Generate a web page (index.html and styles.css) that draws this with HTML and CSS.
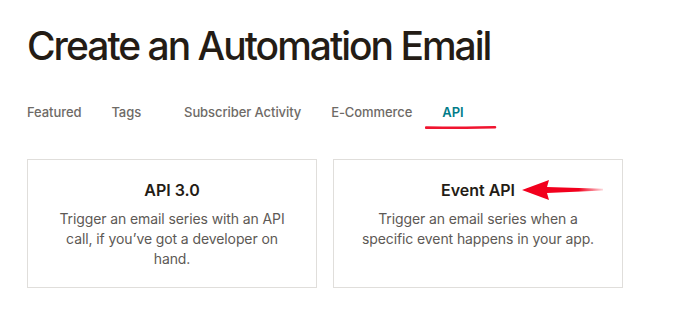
FILE: index.html
```html
<!DOCTYPE html>
<html>
<head>
  <meta charset="utf-8">
  <title>Create an Automation Email</title>
  <link rel="stylesheet" href="styles.css">
</head>
<body>
  <div class="page">
    <h1 class="page-title">Create an Automation Email</h1>

    <div class="tabs">
      <a class="tab">Featured</a>
      <a class="tab tab-wide">Tags</a>
      <a class="tab">Subscriber Activity</a>
      <a class="tab">E-Commerce</a>
      <a class="tab tab-active">API
        <svg class="mark-underline" width="72" height="8" viewBox="0 0 72 8">
          <path d="M1 5.6 C 20 5.9, 45 5.6, 70 5.2" stroke="#f0142f" stroke-width="2.6" fill="none" stroke-linecap="round"/>
        </svg>
      </a>
    </div>

    <div class="cards">
      <div class="card">
        <h2 class="card-title">API 3.0</h2>
        <p class="card-text">Trigger an email series with an API call, if you’ve got a developer on hand.</p>
      </div>
      <div class="card">
        <h2 class="card-title">Event API
          <svg class="mark-arrow" width="84" height="22" viewBox="0 0 84 22">
            <defs>
              <linearGradient id="tail" x1="0" y1="0" x2="1" y2="0">
                <stop offset="0" stop-color="#f2001d"/>
                <stop offset="0.7" stop-color="#f2001d"/>
                <stop offset="1" stop-color="#f2001d" stop-opacity="0.15"/>
              </linearGradient>
            </defs>
            <path d="M1 11 L28 1 L26 8 L82 9.8 L82 11.6 L26 14 L28 21 Z" fill="url(#tail)"/>
          </svg>
        </h2>
        <p class="card-text">Trigger an email series when a specific event happens in your app.</p>
      </div>
    </div>
  </div>
</body>
</html>
```

FILE: styles.css
```css
body {
  margin: 0;
  background: #ffffff;
  font-family: Inter, "Noto Sans", sans-serif;
  color: #241c15;
}
.page {
  padding: 22px 28px 0 27px;
}
.page-title {
  margin: 0;
  font-size: 39px;
  line-height: 48px;
  font-weight: 500;
  letter-spacing: -2px;
  color: #241c15;
}
.tabs {
  display: flex;
  gap: 30px;
  margin-top: 32px;
  font-size: 13px;
  line-height: 20px;
  font-weight: 500;
  letter-spacing: -0.08px;
}
.tab {
  position: relative;
  color: #6e6a66;
  text-decoration: none;
}
.tab-wide {
  margin-right: 13px;
}
.tab-active {
  color: #007c89;
  font-weight: 600;
}
.mark-underline {
  position: absolute;
  left: -17px;
  top: 20px;
}
.cards {
  display: grid;
  grid-template-columns: 290px 290px;
  gap: 16px;
  margin-top: 37px;
}
.card {
  border: 1px solid #e0dedb;
  padding: 19px 24px 18px;
  text-align: center;
}
.card-title {
  position: relative;
  display: inline-block;
  margin: 0;
  font-size: 16px;
  line-height: 22px;
  font-weight: 600;
  color: #241c15;
}
.card-text {
  margin: 8px 0 0;
  font-size: 14px;
  line-height: 20px;
  letter-spacing: -0.1px;
  color: #5d5955;
}
.mark-arrow {
  position: absolute;
  left: 80px;
  top: 0;
}
```
